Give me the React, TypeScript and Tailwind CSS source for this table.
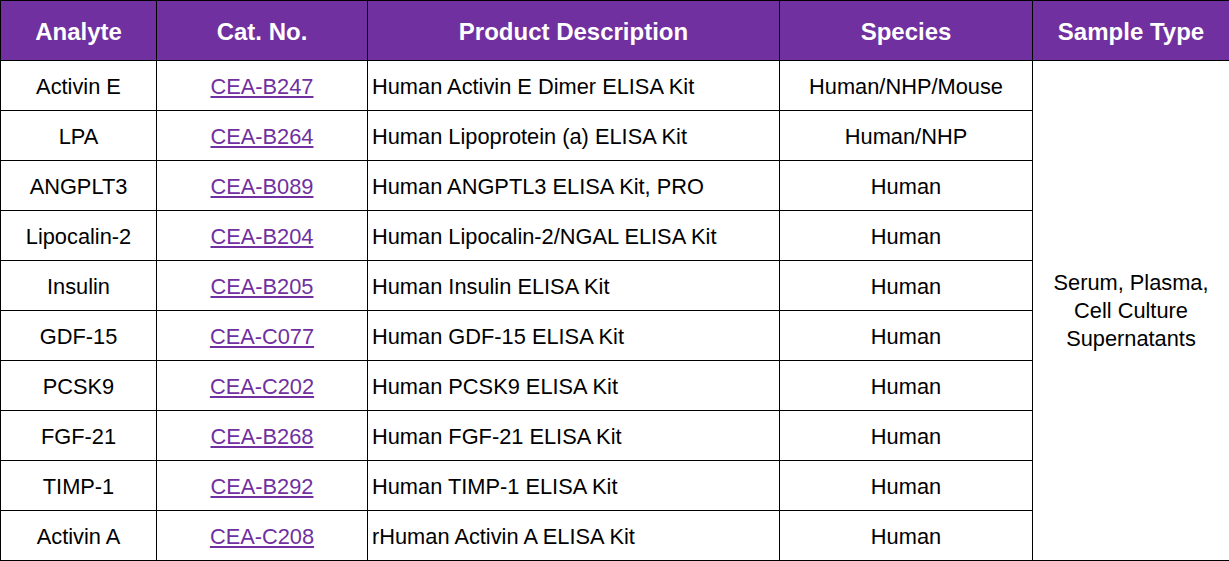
import React from "react";

const rows = [
  ["Activin E", "CEA-B247", "Human Activin E Dimer ELISA Kit", "Human/NHP/Mouse"],
  ["LPA", "CEA-B264", "Human Lipoprotein (a) ELISA Kit", "Human/NHP"],
  ["ANGPLT3", "CEA-B089", "Human ANGPTL3 ELISA Kit, PRO", "Human"],
  ["Lipocalin-2", "CEA-B204", "Human Lipocalin-2/NGAL ELISA Kit", "Human"],
  ["Insulin", "CEA-B205", "Human Insulin ELISA Kit", "Human"],
  ["GDF-15", "CEA-C077", "Human GDF-15 ELISA Kit", "Human"],
  ["PCSK9", "CEA-C202", "Human PCSK9 ELISA Kit", "Human"],
  ["FGF-21", "CEA-B268", "Human FGF-21 ELISA Kit", "Human"],
  ["TIMP-1", "CEA-B292", "Human TIMP-1 ELISA Kit", "Human"],
  ["Activin A", "CEA-C208", "rHuman Activin A ELISA Kit", "Human"],
];

export default function App() {
  return (
    <div className="w-[1229px] h-[561px] bg-white overflow-hidden" style={{ fontFamily: '"Liberation Sans", Arial, sans-serif' }}>
      <table className="table-fixed border-collapse w-[1229px] text-[21.8px] text-black">
        <colgroup>
          <col className="w-[156px]" />
          <col className="w-[211px]" />
          <col className="w-[412px]" />
          <col className="w-[253px]" />
          <col className="w-[197px]" />
        </colgroup>
        <thead>
          <tr className="h-[60px] bg-[#7030a0] text-white font-bold text-[24px]">
            <th className="border border-black pt-[3px] pb-0 px-0 text-center">Analyte</th>
            <th className="border border-black pt-[3px] pb-0 px-0 text-center">Cat. No.</th>
            <th className="border border-black pt-[3px] pb-0 px-0 text-center">Product Description</th>
            <th className="border border-black pt-[3px] pb-0 px-0 text-center">Species</th>
            <th className="border border-black pt-[3px] pb-0 px-0 text-center">Sample Type</th>
          </tr>
        </thead>
        <tbody>
          {rows.map((r, i) => (
            <tr key={i} className="h-[50px]">
              <td className="border border-black pt-[3px] pb-0 px-0 text-center">{r[0]}</td>
              <td className="border border-black pt-[3px] pb-0 px-0 text-center">
                <a href="#" className="text-[#7030a0] underline decoration-2 underline-offset-2">{r[1]}</a>
              </td>
              <td className="border border-black pt-[3px] pb-0 pl-[4px] pr-0 text-left whitespace-nowrap">{r[2]}</td>
              <td className="border border-black pt-[3px] pb-0 px-0 text-center">{r[3]}</td>
              {i === 0 && (
                <td rowSpan={10} className="border border-black p-0 text-center leading-[28px]">
                  Serum, Plasma,
                  <br />
                  Cell Culture
                  <br />
                  Supernatants
                </td>
              )}
            </tr>
          ))}
        </tbody>
      </table>
    </div>
  );
}
